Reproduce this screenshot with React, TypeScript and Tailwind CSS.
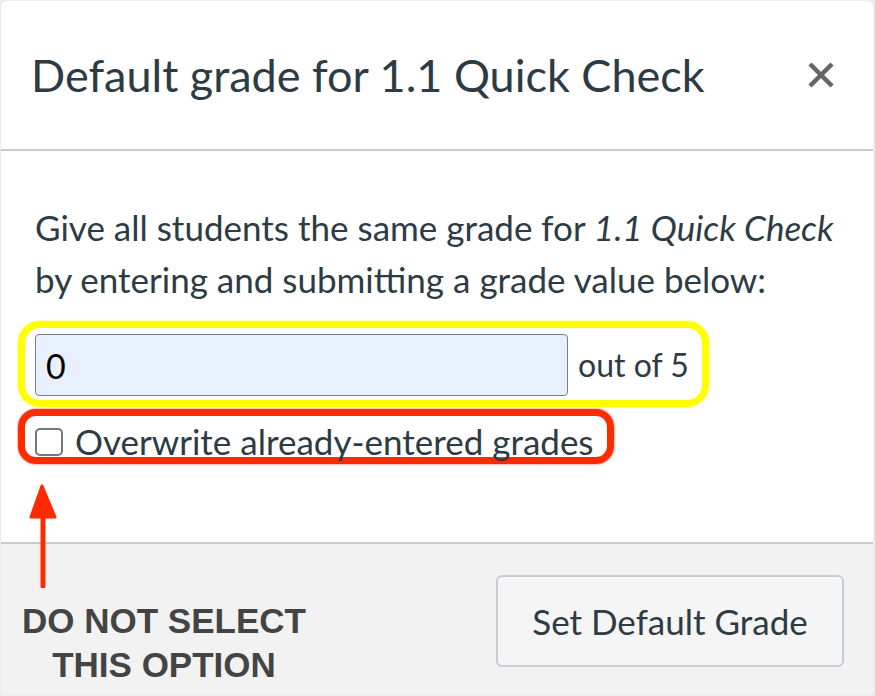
import { X } from "lucide-react";

function Arrow() {
  return (
    <svg
      className="absolute left-[26px] top-[484px]"
      width="34"
      height="104"
      viewBox="0 0 34 104"
    >
      <path d="M17 30 L17 102" stroke="#ff2a00" strokeWidth="5" strokeLinecap="round" />
      <path d="M16 2 L5 33 L29 33 Z" fill="#ff2a00" stroke="#ff2a00" strokeWidth="3" strokeLinejoin="round" />
    </svg>
  );
}

export default function App() {
  return (
    <div
      className="relative h-[696px] w-[875px] overflow-hidden bg-[#ececec] pl-px pt-px"
      style={{ fontFamily: "Lato, 'Noto Sans', sans-serif" }}
    >
      <div className="flex h-[694px] w-[872px] flex-col overflow-hidden rounded-[6px] bg-white">
        {/* header */}
        <div className="flex h-[150px] shrink-0 items-center justify-between border-b-2 border-[#c7cdd1] pl-[30px] pr-[30px]">
          <h2 className="text-[45px] font-normal leading-none text-[#2d3b45]">
            Default grade for 1.1 Quick Check
          </h2>
          <X size={44} strokeWidth={2.5} strokeLinecap="butt" className="text-[#666666]" />
        </div>

        {/* body */}
        <div className="flex-1 pl-[34px] pt-[50px]">
          <p className="text-[35px] leading-[52px] text-[#2d3b45]">
            Give all students the same grade for <em>1.1 Quick Check</em>
            <br />
            by entering and submitting a grade value below:
          </p>

          <div className="relative mt-[29px] flex items-center gap-[10px]">
            <div className="pointer-events-none absolute left-[-17px] top-[-13px] h-[86px] w-[691px] rounded-[22px] border-[7px] border-[#ffff00] shadow-[0_0_2px_#ffff00]" />
            <div className="relative flex h-[62px] w-[533px] items-center rounded-[4px] border border-[#73818c] bg-[#e8f0fe] pl-[10px] text-[34px] text-black">
              0
            </div>
            <span className="relative text-[32px] text-[#2d3b45]">out of 5</span>
          </div>

          <div className="relative mt-[28px] flex items-center gap-[12px]">
            <div className="pointer-events-none absolute left-[-17px] top-[-15px] h-[55px] w-[596px] rounded-[18px] border-[7px] border-[#ff2a00] shadow-[0_0_2px_#ff2a00]" />
            <div className="relative h-[28px] w-[28px] rounded-[5px] border-2 border-[#777777] bg-white" />
            <span className="relative text-[35px] leading-none text-[#2d3b45]">
              Overwrite already-entered grades
            </span>
          </div>
        </div>

        {/* footer */}
        <div className="flex h-[153px] shrink-0 items-start justify-between border-t-2 border-[#c7cdd1] bg-[#f2f2f2] pr-[29px] pt-[31px]">
          <div
            className="mt-[24px] w-[326px] text-center text-[35px] font-bold leading-[44px] text-[#444444]"
            style={{ fontFamily: "'Liberation Sans', Arial, sans-serif" }}
          >
            DO NOT SELECT
            <br />
            THIS OPTION
          </div>
          <button className="h-[92px] w-[348px] rounded-[6px] border-2 border-[#c7cdd1] bg-[#f5f5f5] text-[35px] text-[#2d3b45]">
            Set Default Grade
          </button>
        </div>
      </div>
      <Arrow />
    </div>
  );
}
